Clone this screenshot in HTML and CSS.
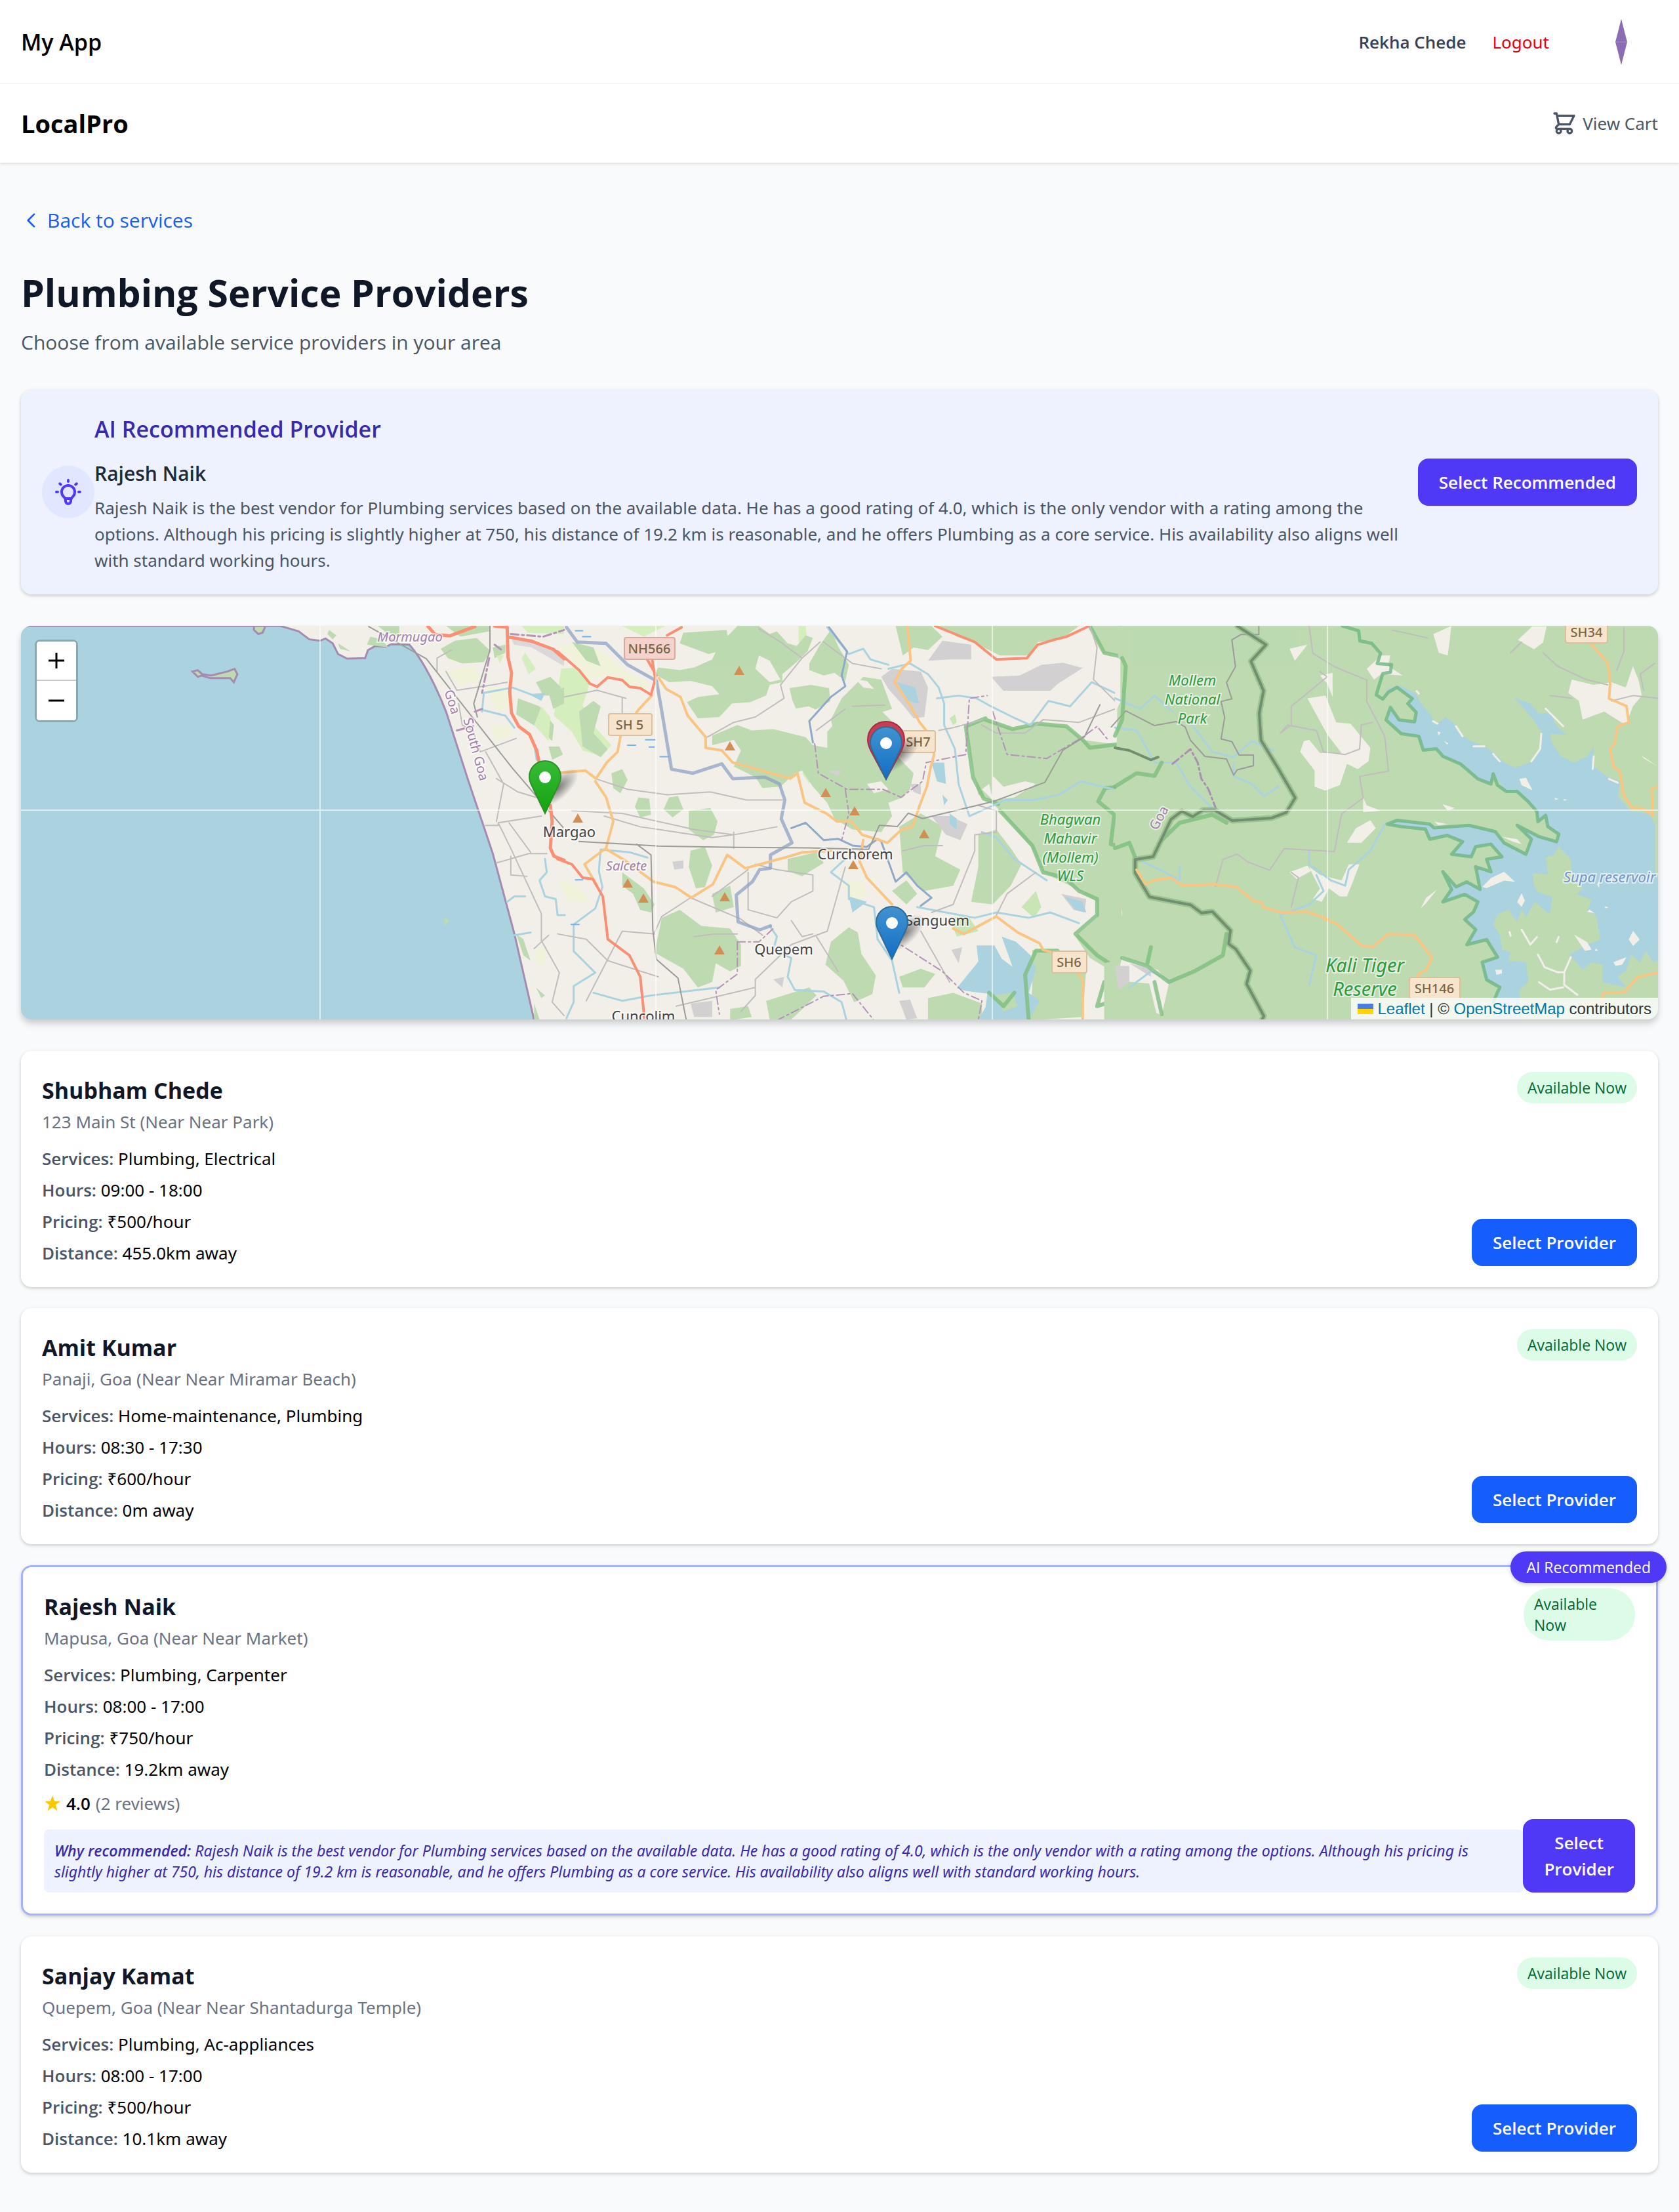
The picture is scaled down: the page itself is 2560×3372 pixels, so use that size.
FILE: index.html
```html
<!DOCTYPE html>
<html lang="en">
<head>
<meta charset="utf-8">
<meta name="viewport" content="width=device-width, initial-scale=1">
<title>LocalPro - Plumbing Service Providers</title>
<link rel="stylesheet" href="styles.css">
</head>
<body>
<nav class="topbar">
  <a class="brand" href="#">My App</a>
  <div class="account">
    <span class="user">Rekha Chede</span>
    <button class="logout" type="button">Logout</button>
    <svg class="avatar" viewBox="0 0 80 80" aria-hidden="true"><path d="M40 5l9 35H31zM40 75l9-35H31z" fill="#8a6db3"/><path d="M31 40h18" stroke="#a58fc6"/></svg>
  </div>
</nav>
<header class="header">
  <a class="logo" href="#">LocalPro</a>
  <a class="cart" href="#">
    <svg class="icon-cart" viewBox="0 0 24 24" aria-hidden="true"><path d="M3 3h2l.4 2M7 13h10l4-8H5.400M7 13L5.400 5M7 13l-2.293 2.293c-.63.63-.184 1.707.707 1.707H17m0 0a2 2 0 100 4 2 2 0 000-4zm-8 2a2 2 0 11-4 0 2 2 0 014 0z"/></svg>
    <span>View Cart</span>
  </a>
</header>
<main class="page">
  <a class="back" href="#">
    <svg class="icon-back" viewBox="0 0 24 24" aria-hidden="true"><path d="M15 19l-7-7 7-7"/></svg>
    <span>Back to services</span>
  </a>
  <h1 class="title">Plumbing Service Providers</h1>
  <p class="subtitle">Choose from available service providers in your area</p>

  <section class="advice">
    <div class="advice-icon">
      <svg class="icon-bulb" viewBox="0 0 24 24" aria-hidden="true"><path d="M9.663 17h4.673M12 3v1m6.364 1.636l-.707.707M21 12h-1M4 12H3m3.343-5.657l-.707-.707m2.828 9.900a5 5 0 117.072 0l-.548.547A3.374 3.374 0 0014 18.469V19a2 2 0 11-4 0v-.531c0-.895-.356-1.754-.988-2.386l-.548-.547z"/></svg>
    </div>
    <div class="advice-body">
      <h2 class="advice-title">AI Recommended Provider</h2>
      <h3 class="advice-name">Rajesh Naik</h3>
      <p class="advice-text">Rajesh Naik is the best vendor for Plumbing services based on the available data. He has a good rating of 4.0, which is the only vendor with a rating among the options. Although his pricing is slightly higher at 750, his distance of 19.2 km is reasonable, and he offers Plumbing as a core service. His availability also aligns well with standard working hours.</p>
    </div>
    <button class="btn btn-indigo advice-btn" type="button">Select Recommended</button>
  </section>

  <section class="map">
    <svg class="map-canvas" viewBox="0 0 2496 600" preserveAspectRatio="xMidYMid slice" role="img" aria-label="Map of providers">
      <defs>
        <linearGradient id="blue" x1="0" y1="0" x2="0" y2="1"><stop offset="0" stop-color="#4292cf"/><stop offset="1" stop-color="#126fc6"/></linearGradient>
        <linearGradient id="green" x1="0" y1="0" x2="0" y2="1"><stop offset="0" stop-color="#38bb38"/><stop offset="1" stop-color="#12a30e"/></linearGradient>
        <radialGradient id="shade"><stop offset="0" stop-color="#000" stop-opacity=".5"/><stop offset="1" stop-color="#000" stop-opacity="0"/></radialGradient>
        <path id="pin" d="M25 1C11.700 1 1 11.700 1 25c0 5 1.600 9.500 4 14L25 81l20-42c2.400-4.500 4-9 4-14C49 11.700 38.300 1 25 1z"/>
        <path id="peak" d="M0-14L8 0H-8z" fill="#d08f55"/>
      </defs>
      <rect width="2496" height="600" fill="#f2efe9"/>

      <!-- central region: coast to the ghats -->
      <g transform="translate(818 -12) scale(.54847 .40816)">
        <g fill="#f0f2da"><path d="M0 110L60 90 130 130 190 200 250 240 255 280 200 250 140 220 90 230 40 160zM790 990l60-10 10 60-40 20zM0 980l60 20 30 60-60 0z"/></g>
        <g fill="#d5eebe"><path d="M180 30h120l-60 40zM10 190l40-5 40 60-20 80 20 60 60 90-30 40-50-20-30-70-50-60zM670 30l20 0 5 60-25 0zM680 580l30-10-10 50z"/></g>
        <g fill="#bddab1">
          <path d="M350 55l120-10 10 70-60 20-80-40zM500 30h60l30 30 20-10 30 45 25 10 25-40 20 10-15 50-30 40-40 45 0 30-35 10-10 40-45 25-50 5-35 50-60 5-30-60 30-20 60-10-20-30-60-20-60 5-40-30 10-25 60 10 40-10 50-30 20-55z"/>
          <path d="M645 262l60-12 50 12 3 50-40 30-20-12-35 8-10-30zM700 170l30-70 30-55 20 60 30 70-10 60-30-30-30 10-40-20zM940 30h100l30 40-40 50-40-10-30 30z"/>
          <path d="M1060 30h390l-50 50-65 10-25 50-80 0-60-40-60-30zM1480 30h88v110l-50-10z"/>
          <path d="M790 300l60-80 50 10 30 110-50 20-30 60-80 20-10-60z"/>
          <path d="M430 440l70-40 40 20 60-5 90 30 20 30 40 10 0-60 40-60 60-30 30-15 60 80 20 60-20 50 50 70-10 60-20 30-40 20 10 50-30 60-80-10-50-40-20-60-40-60-30-60-20 10-40 50-50 5-20-40-60-40 20-60-20-40-60 20z"/>
          <path d="M150 580l30-15 15 40-20 50-20-20zM225 670l30 5 5 60-30 10-15-40zM310 670l25-5 15 50-30 30-25-30zM365 720l60-10 20 50-10 50-30 20-40-40zM370 870l40-15 20 70-20 80-25 5-20-80zM640 900l80-25 20 40-60 50-40-20zM180 950l60 60 30 60-10 30-30-10-20-60-30-30zM430 1030l50-30 10 80-50 20z"/>
          <path d="M290 1120l50-30 60 60 80 10 30 60 0 80-30 20-40-30-10 70-40 20-40-70-80-60zM760 1210l50-55 25 20 10 80 40 80-10 70-50 30-30-80-50-60zM950 1340l60-30 40 20-30 50-60 0zM580 1430l120-50 20 30-70 90-60 0zM480 1460l50-10 10 40-60 13zM1030 1420l70-20 80 40 0 63-150 0z"/>
          <path d="M950 780l60-50 60 50-20 110 70 50-20 60-80 20-60-70zM1170 810l50-20 40 70 30 60-30 80-50 70-60-10 20-130zM930 1020l40-40 30 50-30 40z"/>
          <path d="M1135 405l55-25 75 35 70-20 80 10 45 50 108 20V1310h-38l-50-40-40-80 60-70 0-60-60-50-90-60-30-90-90-140-30-40-30-20-20-130z"/>
          <path d="M40 90l60 20 20 70-40-20zM1320 1240l60 0 90 70-10 180-150 13 10-120zM60 350l40-40 20 20-20 100 40 60-20 30-50-40z"/>
        </g>
        <g fill="#f2efe9"><path d="M560 140l30 20 30 70-30 10-40-50zM1210 590l30 40 60-20 30 10-60 50-60 10zM860 620l40-10 20 30-40 15zM830 230l30 5 20 30-30-5zM1180 640l20-20 10 60z"/></g>
        <g fill="#c8e5b5"><path d="M1090 1120l50-10 30 60-60 20zM1290 1080l40-60 15 60-20 40zM1090 375l15-15 5 30-10 10z"/></g>
        <g fill="#d3d0d1"><path d="M1030 160l40-75 80 15 0 55-60 0zM900 220l30-30 80 10 20 60-10 110-30 5-30-50-40-60zM1205 220l80-5 60-40 60-8 55 20-70 60-20 25-130 0zM750 570l40 0-10 20zM1040 740l50 0 50 30-20 60-40-20zM370 1440l60-10 0 60-50 0zM950 1430l30-5 20 70-30 5zM1095 1240l30-10-10 60zM320 910l30-5 0 30-25 5zM600 1350l30-10-5 40zM1400 1030l70 20-5 50-30-10zM980 620l30 0 0 40-20-10z"/></g>
        <g fill="#aad3df"><path d="M1040 540l35 0 5 80-25-10zM1090 730l20 20 0 40-20-20zM1235 1190l40 20 40 50 15 50-20 90 30 30-30 73-140 0 20-50 5-50-60-10-25-10 60-100-5-60 50 0 20 50 30 30zM1410 1040l50 20 10 40-30-10zM945 240l50 20 10 60-30-10zM810 1040l50 20-40 40zM1070 660l15 20-10 20z"/></g>
        <path d="M1215 1410l50-10 15 50-40 20z" fill="#bddab1"/>
        <g class="ln" stroke="#7fbf7f" stroke-width="6" opacity=".8"><path d="M1480 30l40 100 48 15M1190 380l75 35 70-20 80 10 45 50 20 30 88-15M1190 375l-55 30 20 190 30 80 40 20M1568 630l-45 5-20 50 45 50-10 110 30 10M1230 720l90 130 30 100 60 20 40 50 50 30 0 60-60 70 60 80 68 60M1310 1503l-10-170 30-90 60 0M1200 1400l40 50 30-50M1520 1360l-20 90 68-30"/></g>
        <g class="ln" stroke="#aad3df" stroke-width="3"><path d="M750 35l60 100 40-20 20 40 50 20M920 190l60-20 50 40 30 50 15 60 0 80 30 90 10 130 30 120 100-60 80 0 70-20 60-50 90 30M1055 300l60-10 50 10 40 30 60 40 50 30 50-90 60 20 60-90 80 50M120 865l-5 80 10 60-20 80-60 60 0 100 60 80-60 50 0 60-20 60M100 1400l80 30 80-20 190-30M590 1150l20 40-10 50 50 30-10 70 20 50 80 5 50 40 20 100M800 900l-40 50 50 50 0 50 70 30 10 120 40 80 20 120M1000 1080l80 20 80 20 60-20 90 20 60-20 80 40M1180 800l40 20 50 80 90 80M120 865l80 10 50 20"/></g>
        <g class="ln" stroke="#c0bdbd" stroke-width="2"><path d="M560 40l60 50 60 60 50-60 0 0M680 150l-60 100 10 50-80 70-60 20-80 60M740 90l80 80 80 20M0 300l110-30 80 30M180 300l0 80M105 600l90 40 110 20 120-10 100 30 100 0M40 720l140 10 200 60 110 20 120-30M490 800l0 60M130 740l100 40 200 40 60-10M530 950l0 140 80 30 40-60 60-40 0-60-100-20-60-20M380 1190l60-10 60 0M800 930l-50 240-100 50-100 130 0 60-40 60M370 1045l-80 70-20 60M370 1045l140 80 60 60M270 1180l-90-10-100 260M330 1450l220-70M430 1040l100-100M1060 420l40-10 80-30M1180 400l40 30 80 0 50-50 100 10 100-50 18-20M1480 30l20 80-10 120 60 80M1170 700l50 20 0 80-60 10 0 60-60 200-60 30M1330 950l-80 80-30 80M820 330l90-5M800 340l-80 80M0 1180l80 20 60 80 140 60M720 1190l60 130M960 870l60-20 50 0M1010 1170l80 190M650 1130l30 60 30-10"/></g>
        <g class="ln" stroke="#8fa3c4" stroke-width="5" opacity=".75"><path d="M25 35l30 55 80 5 60 80 80 60 12 90 30 240 60 15 80-35 30 55 90-5 40 25 15 60-10 70 30 90-60 45 0 50-30 5-20 45-45 50 5 100 60 30 30-15"/></g>
        <g class="ln" stroke="#8fa9c9" stroke-width="3"><path d="M650 785l40-20 50 65 40-5 40 25 40 5 30-30 10 10 40 150 30-35 30 50 40 45-30 30"/><path d="M755 35l50 90-15 90 10 40-40 40-60 90 10 80"/></g>
        <g class="ln dash" stroke="#b592b7" stroke-width="2"><path d="M715 470l10 110 80 60 100 0 50 30 60-60 10-70 110-30 10-210 50-10M800 640l10 90-20 100M1210 350l40 160 110 15 100-80 40-40 30 50M500 1210l60 0 40-50M500 1210l0 120-60 60 10 90M610 1503l130-90 80-10 60 100M930 1200l140 120 60 80 50 30-10 70"/></g>
        <g class="ln" stroke="#f8c583" stroke-width="4"><path d="M282 225l20 40 40 30 20 70 50 80 0 40 45 10 30 45 80 30 80 30 20-20 20 110 60 40 30 30 40 0 30 50 50 20 20 10 40-50 30-10 20-80 20-70 10-70 10-50-10-70-30-50-30-70-40-80 20-50 25-30-10-140M262 290l-35 50-50 90-10 70-30 40-30 60-30-30-77 8M105 610l30 60 20 90-20 100-60 60 35 80M137 865l50 40 80 80 60 20 45 40 60-50 40-110 50 50 110-40 50-20 80-5M850 830l-10 80 20 60 70 100M1100 1160l30 20 90-65 60 60 60 40 10 25 60 20 50 90 0 150"/></g>
        <g class="ln" stroke="#f98f74" stroke-width="4"><path d="M0 125l60 70 30 50 20 12 30-35 40 10 20 25 30 5 30 25 12-60-10-80M275 215l-30-70M0 900l40 20 30 50 28 5 28 65 14 160 60 60 30 80 12 160M345 35l-40 30M1050 30l110 60 60 65 85-5 30-50 50-20 30-10 60-38"/></g>
        <g class="ln" stroke="#9c9c99" stroke-width="2"><path d="M60 835l160 12 60 5 220 5 200 2 165 5 30-90 50 5 30-50 40 20 140-45 60-20 80-40 60-30 50-120 60-50 43-120M220 845l40 40 5 280 10 110 60 70 25 170"/></g>
        <path d="M50 48h20M70 70h22M195 475h22M245 455h26M285 518h24M50 978h20M38 1145h22M255 482h14" class="ln" stroke="#6fb0f0" stroke-width="2"/>
      </g>

      <!-- western region: sea, islands and coastline -->
      <g transform="translate(-32 -12) scale(.54847 .40816)">
        <path d="M0 30h780l50 20 30 30 30 5 15-8 20 18 15 40 25 17 50-2 8-30 20-15 30 3 15-10 50 2Q1190 180 1240 350L1300 600 1370 880 1430 1180 1485 1503H0z" fill="#aad3df" stroke="#a48bb0" stroke-width="3" vector-effect="non-scaling-stroke"/>
        <g fill="#bddab1" stroke="#a48bb0"><path d="M706 30h32l-8 25-12 5-12-15zM535 200l15-5 12 15 25 5 45-15 20-10 8 20-10 30-10-15-55 0-25-10-10 5z" stroke-width="3" vector-effect="non-scaling-stroke"/></g>
        <g fill="#bddab1"><path d="M915 45l20 20-10 15-15-20zM940 95l35 30-30-10zM1030 70l30 10 20 30-60-10zM1050 30l60 0 0 40-40-20zM1225 115l40-30 60-10 40 50-20 40-60 5-40-20zM1240 30h120l0 20-80 20zM1370 110l35-10 0 30-30 20zM1440 300l60 30 40 70-5 60-40-50-60-50zM1490 240l40-20 30 40-20 30-30 0zM1525 280l43-20v60l-30 20zM1525 480l30 0 10 30-30 20zM1235 1120l15 10-15 20zM1435 1180l20 20 20 80-20-20zM1490 1380l25 30-10 10zM1485 1440l15 60-15 0z"/></g>
        <g fill="#d5eebe"><path d="M1450 30h118v30l-100-5zM1460 130l30 60-20 20-20-60zM1380 140l20 0-10 30zM1505 330l25 40-5 90-40-60z"/></g>
        <g fill="#f0f2da"><path d="M1230 200l90-20 20 50-60 20zM1350 260l60 0 10 70-40 20zM1360 400l60 0 0 40-40 20zM1490 1240l30-10-5 70-25-10z"/></g>
        <g fill="#dbd8da"><path d="M1420 70l60 10 60 40 28 30v30l-90-70-50-10z"/></g>
        <g class="ln" stroke="#c0bdbd" stroke-width="2"><path d="M1215 200l0-50 40-30M1240 200l30 70 100-20 40-10M1275 320l10 80 30 20 20 80 100-50M1350 500l50 120-20 140M1380 600l60 50 50 20M1350 775l35 0 0-10 120-25M1385 765l40 110 80 230 0 100 50 120-20 110 33 50M1380 915l90-35 50 0M1415 765l60 110M1485 1235l40-50M1420 890l0 70 45 5"/></g>
        <g class="ln" stroke="#9c9c99" stroke-width="2"><path d="M1025 32l160 120 240 410 140 220M1362 30l0 90-45 200 10 50"/></g>
        <g class="ln" stroke="#aad3df" stroke-width="3"><path d="M1340 350l5-70 80-20 60 30M1345 345l60 20 25 45M1410 1060l20-20 30 0M1430 1185l45-10M1515 900l5 50-20 30 15 60 30 10 5 60 20 0M1487 490l5 40"/></g>
        <path d="M1470 285l45-5-10 30z" fill="#aad3df"/>
        <g class="ln" stroke="#f98f74" stroke-width="5"><path d="M1190 32l20 30 40 5 70-35M1375 30l35 5 2 110 10 60-5 70 5 80 20 50 30 30 20 60 20 130M1418 72l60 15 60 30 30 35M1530 700l5 60-5 100 10 30 28 15"/></g>
        <g class="ln dash" stroke="#b592b7" stroke-width="3"><path d="M1420 60l90 10 58-25M1375 100l20 20M1360 150l-20 130M1270 420l30-10M1320 350l20-10M1305 375l10 0 0 30"/></g>
      </g>

      <!-- eastern region: reserves -->
      <g transform="translate(1668 -12) scale(.54847 .40816)">
        <path d="M10 30H1568V1503H-30V1290L0 1280 20 1100 0 900z" fill="#bddab1"/>
        <g fill="#f2efe9">
          <path d="M0 145l15 10 0 160-15 40zM485 115l50-15-35 60zM570 215l35-10 0 90-15-50zM535 300l50-10 30 100 40 5 55 90-5 50-30 30-30-20-20 80-40 20-30-15 0-60-40-70 10-40 15-5 30 50 60 0-40-70zM885 60l50-30-5 60-5 50-25-10zM1160 32l40 0-10 60-25 25-45-35zM740 140l25 0-5 40 40 35-60-5-20 20-20-40zM1270 230l60 20 50-10 40 20 20-80 15 50 10 60-25 40-20 70-60-50-60 30-10-70-30-30zM1465 515l45 40-40-30zM645 840l25-55 40-30 15 30-40 55zM485 950l50-25 10 20-40 30zM540 930l30 30 60 20 20-60 30 0-20 70-15 50-20 0-30-30-20 50-25-10 20-40-20-50zM690 670l10 30 40 20-50 5zM910 695l35 15-20 10zM850 1085l15-40 30-30-30 50zM20 1265l100 50 30 50-20 120-15-10-20-110-90-10z"/>
        </g>
        <path d="M0 1300l40 0 0 60-30 30zM40 1290l60 20 0 30z" fill="#d3d0d1"/>
        <g class="ln" stroke="#aad3df" stroke-width="3"><path d="M0 300l70 40 40-50 50 60M0 410l60 10 50 120 60 0 40 90 60 80 50 40M210 390l60 110 60 20 50-60 60 35M330 540l0 50 50 30 35 45 40-35M60 900l80 50 40 30 0-50M750 770l-40 100-60 70-10 60-40-20-60-60 0-50M560 960l20 60-40 50-80 40 20 60 20 60 60 30-20 110M40 1380l60-60 60 40"/></g>
        <g class="ln" stroke="#c0bdbd" stroke-width="2"><path d="M540 32l10 100 60 50 90 50 0 80 50 130 10 130-80 20 10 80-60 60-20 140-140-10-40 80-60-30-30-30-40 20-20 100M570 200l20 20-100 110 0 70-30 30 20-30 80 20 20 80 60 10 40-20 5-90 30-10M1100 130l30-40M1190 130l40 50 80 50 60 20M1415 35l0 90-20 70M1500 170l-40 40 10 60M1380 310l60-20 70 10M490 950l20 20-20 110M1210 290l60 10M770 45l100 30"/></g>
        <g class="ln" stroke="#9c9c99" stroke-width="2"><path d="M400 32l0 30-50 0-25 20 10 100-25 60 15 60-30 10 10 60-10 80 30 10 20 50 40 0 0 40-45 15-10 20-20-60-60-10-40-60-15-50-25-20-60 15-80-55-40 60"/></g>
        <g class="ln dash" stroke="#ab8fb0" stroke-width="3"><path d="M160 545l50-55 20 50 10 60 20 40 20 70"/></g>
        <g class="ln" stroke="#7fbf7f" stroke-width="6" opacity=".8"><path d="M0 630l60-50 50 10 20-50M0 860l40-20 15 50M130 830l50-65 90-30 40 30M20 1270l70 30 60 60 70-40 80-60 10-80M130 1480l-20-120M20 150l10 30-10 200-20 60M100 1230l-10 60"/></g>
        <g class="ln" stroke="#8fbb87" stroke-width="9" opacity=".7"><path d="M340 30l80 70-42 62 35 110-12 85 5 100 50 110 45 105-25 55-40 20-110 10-50-40-30 0-30 25-30-20-30 30-50 140-50 10 0 50 40 90 115 30 30 30 30-5 50 70-5 50 20 20 40 80-10 50 48 120-15 40"/></g>
        <g class="ln" stroke="#728e6f" stroke-width="4"><path d="M340 30l80 70-42 62 35 110-12 85 5 100 50 110 45 105-25 55-40 20-110 10-50-40-30 0-30 25-30-20-30 30-50 140-50 10 0 50 40 90 115 30 30 30 30-5 50 70-5 50 20 20 40 80-10 50 48 120-15 40M0 485l40 10 60 35 20-10"/></g>
      </g>

      <!-- Supa reservoir -->
      <g transform="translate(1988 0) scale(.33333 .38265)">
        <path fill="#aad3df" d="M235 275L265 292 290 250 340 238 415 270 440 310 480 350 510 390 555 365 600 395 620 430 670 460 720 475 780 510 820 545 870 565 950 540 985 490 990 420 950 370 865 285 940 310 980 350 1030 345 1060 400 1110 435 1030 430 1040 470 1080 520 1140 545 1200 520 1230 480 1230 560 1290 600 1350 620 1340 680 1400 740 1480 745 1510 790 1510 980 1530 1000V1330L1500 1340 1470 1295 1440 1340 1400 1310 1380 1370 1340 1400 1380 1440 1270 1420 1270 1350 1220 1340 1180 1370 1120 1310 1200 1270 1260 1250 1240 1150 1200 1140 1220 1090 1150 1070 1180 1050 1130 990 1125 930 1070 880 1045 915 1010 920 1020 990 950 985 955 1030 970 1060 1040 1080 1030 1150 960 1100 920 1160 900 1130 880 1180 840 1130 790 1150 770 1190 800 1230 810 1290 850 1300 840 1335 920 1340 930 1420 890 1450 900 1568H770L800 1440 740 1410 720 1340 790 1320 740 1250 650 1270 690 1210 640 1170 680 1140 700 1100 640 1070 540 1100 580 1050 540 980 600 1040 650 1020 710 1050 690 960 760 980 740 930 810 920 760 870 690 880 670 920 580 910 630 860 560 835 480 850 460 810 350 800 285 790 330 775 480 790 500 805 660 795 780 820 820 865 920 910 945 850 880 795 980 840 1060 860 1070 830 1020 800 1010 755 975 780 970 740 930 700 880 660 830 660 770 590 760 630 700 610 620 550 540 520 510 490 450 495 430 440 350 430 290 375 300 325 340 375 410 382 418 345 380 310 400 290 330 245 290 265 265 292z"/>
        <g class="ln" stroke="#6fb684"><path stroke-width="5" opacity=".8" d="M80 0L155 20 160 60 215 70 255 110 240 150 305 155 300 185 265 190 235 275 265 292 290 265 330 245 400 290 380 310 418 345 410 382 340 375 300 325 280 375 350 430 430 440 450 495 510 490 540 520 620 550 700 610 760 630 770 590 790 635 830 660 880 660 930 700 970 740 975 780 1010 755 1020 800 1070 830 1060 860 980 840 880 795 945 850 920 910 820 865 780 820 660 795 500 805 480 790 330 775 285 790 350 800 460 810 480 850 560 835 630 860 580 910 670 920 690 880 760 870 810 920 740 930 760 980 690 960 710 1050 650 1020 600 1040 540 980 580 1050 540 1100 640 1070 700 1100 680 1140 640 1170 690 1210 650 1270 740 1250 790 1320 720 1340 740 1410 800 1440 770 1500"/></g>
        <path fill="#f2efe9" d="M890 610l30-5 30 50-50-20zM720 1040l40-35 60-25 50 40-50-5-80 30zM880 1100l20-35 15 30-15 25zM780 1370l30 0 0 15-25 5zM1390 1250l20-35 30 35-30 25zM515 420l15 5-10 12zM545 460l20 8-5 5zM1050 685l20 5-15 3zM1090 690l20 3-15 4zM1320 1340l60-20-20 30-30 5zM1200 1140l35 5-25-15zM1245 1030l10-15 0 30zM1280 1118l18 3-15 5zM1140 1230l60 30 20 30-30 5zM500 780l60 10-40 5zM810 840l70 10 20 20-40-10zM1240 1285l10 10-15 0z"/>
        <g class="ln" stroke="#f2efe9" stroke-width="3"><path d="M900 1210l40 60 30-30M975 1310l30 50 60 20 30 0 30-60M1095 1380l0 50 60 40M980 1420l50 30 60-10M1060 1260l10-20M845 1220l5 15M430 270l-10-10M495 380l20 10M600 400l30 40M680 480l50 0M770 510l30 30M990 430l-5 60-40 50M1010 330l80 70M1230 520l-5 50M1300 610l40 15"/></g>
        <g class="ln" stroke="#f8c583" stroke-width="4"><path d="M1215 70L1295 150 1305 230 1300 290 1380 320 1390 385 1340 400 1325 470 1305 490 1320 560 1350 580 1365 670 1405 725 1460 730 1500 755 1495 650 1530 640M1530 1380L1430 1400 1370 1460 1275 1460 1265 1500 1180 1510M0 1170L50 1185 170 1275 220 1278 290 1228 410 1232 490 1320 465 1370 430 1385 425 1400"/></g>
      </g>
      <path class="ln" stroke="#f8c583" stroke-width="4" d="M1701 372l14 22 12-6 27-4 16 12 50-2 33 4 27 22 11 1 3 8 27 8 40-1 32 11"/>

      <g fill="none" stroke="#fff" stroke-opacity=".6" stroke-width="2"><path d="M456 0v600M968 0v600M1481 0v600M1992 0v600M0 281h2496"/></g>

      <g>
        <use href="#peak" x="1095" y="75"/><use href="#peak" x="1081" y="190"/><use href="#peak" x="1227" y="261"/><use href="#peak" x="1271" y="289"/><use href="#peak" x="1377" y="324"/><use href="#peak" x="1269" y="371"/><use href="#peak" x="849" y="300"/><use href="#peak" x="925" y="399"/><use href="#peak" x="949" y="422"/><use href="#peak" x="1073" y="420"/><use href="#peak" x="1065" y="501"/>
      </g>

      <g stroke-width="2">
        <g fill="#f3d3cb" stroke="#dba99c"><rect x="920" y="18" width="77" height="33" rx="3"/></g>
        <g fill="#f7e4cd" stroke="#dcbf9c"><rect x="896" y="134" width="66" height="33" rx="3"/><rect x="1342" y="160" width="52" height="33" rx="3"/><rect x="1572" y="496" width="53" height="33" rx="3"/><rect x="2355" y="-6" width="64" height="32" rx="3"/><rect x="2117" y="536" width="77" height="33" rx="3"/></g>
      </g>
      <g class="shield" text-anchor="middle">
        <text x="958" y="42">NH566</text><text x="928" y="158">SH 5</text><text x="1368" y="184">SH7</text><text x="1598" y="520">SH6</text><text x="2387" y="17">SH34</text><text x="2155" y="560">SH146</text>
      </g>
      <g class="town" text-anchor="middle">
        <text x="836" y="322">Margao</text><text x="1272" y="356">Curchorem</text><text x="1397" y="457">Sanguem</text><text x="1163" y="501">Quepem</text><text x="949" y="603">Cuncolim</text>
      </g>
      <g class="area" text-anchor="middle">
        <text x="593" y="24">Mormugao</text><text x="923" y="373">Salcete</text>
        <text transform="translate(651 118) rotate(72)" class="area-up">Goa</text>
        <text transform="translate(687 190) rotate(75)" class="area-up">South Goa</text>
        <text transform="translate(1741 296) rotate(-62)" class="area-up">Goa</text>
      </g>
      <g class="park" text-anchor="middle">
        <text x="1786" y="91">Mollem</text><text x="1786" y="120">National</text><text x="1786" y="149">Park</text>
        <text x="1600" y="303">Bhagwan</text><text x="1600" y="332">Mahavir</text><text x="1600" y="361">(Mollem)</text><text x="1600" y="389">WLS</text>
        <g class="park-big"><text x="2049" y="528">Kali Tiger</text><text x="2049" y="564">Reserve</text></g>
      </g>
      <text class="lake" x="2352" y="391">Supa reservoir</text>

      <g>
        <ellipse cx="22" cy="0" rx="40" ry="17" fill="url(#shade)" transform="translate(802 262) rotate(-42)"/>
        <ellipse cx="22" cy="0" rx="40" ry="17" fill="url(#shade)" transform="translate(1322 211) rotate(-42)"/>
        <ellipse cx="22" cy="0" rx="40" ry="17" fill="url(#shade)" transform="translate(1330 484) rotate(-42)"/>
        <use href="#pin" x="774" y="205" fill="url(#green)" stroke="#2c9129" stroke-width="2"/><circle cx="799" cy="231" r="9" fill="#fff"/>
        <path d="M1319 146c-16 0-28 12-28 28 0 6 2 11 5 17l23 43 23-43c3-6 5-11 5-17 0-16-12-28-28-28z" fill="#cb3d57" stroke="#a92c45" stroke-width="2"/>
        <use href="#pin" x="1294" y="153" fill="url(#blue)" stroke="#2e6c97" stroke-width="2"/><circle cx="1319" cy="179" r="9" fill="#fff"/>
        <use href="#pin" x="1303" y="427" fill="url(#blue)" stroke="#2e6c97" stroke-width="2"/><circle cx="1328" cy="453" r="9" fill="#fff"/>
      </g>
    </svg>
    <div class="zoom">
      <button class="zoom-btn" type="button" aria-label="Zoom in"><svg class="icon-zoom" viewBox="0 0 24 24" aria-hidden="true"><path d="M0 12h24M12 0v24"/></svg></button>
      <button class="zoom-btn" type="button" aria-label="Zoom out"><svg class="icon-zoom" viewBox="0 0 24 24" aria-hidden="true"><path d="M0 12h24"/></svg></button>
    </div>
    <div class="credit">
      <svg class="flag" viewBox="0 0 12 8" aria-hidden="true"><path fill="#4c7be1" d="M0 0h12v4H0z"/><path fill="#ffd500" d="M0 4h12v4H0z"/></svg>
      <a href="#">Leaflet</a> | © <a href="#">OpenStreetMap</a> contributors
    </div>
  </section>

  <ul class="providers">
    <li class="card">
      <div class="info">
        <h2 class="name">Shubham Chede</h2>
        <p class="address">123 Main St (Near Near Park)</p>
        <div class="facts">
          <p><span class="label">Services:</span> Plumbing, Electrical</p>
          <p><span class="label">Hours:</span> 09:00 - 18:00</p>
          <p><span class="label">Pricing:</span> ₹500/hour</p>
          <p><span class="label">Distance:</span> 455.0km away</p>
        </div>
      </div>
      <div class="side">
        <span class="status">Available Now</span>
        <button class="btn btn-blue" type="button">Select Provider</button>
      </div>
    </li>
    <li class="card">
      <div class="info">
        <h2 class="name">Amit Kumar</h2>
        <p class="address">Panaji, Goa (Near Near Miramar Beach)</p>
        <div class="facts">
          <p><span class="label">Services:</span> Home-maintenance, Plumbing</p>
          <p><span class="label">Hours:</span> 08:30 - 17:30</p>
          <p><span class="label">Pricing:</span> ₹600/hour</p>
          <p><span class="label">Distance:</span> 0m away</p>
        </div>
      </div>
      <div class="side">
        <span class="status">Available Now</span>
        <button class="btn btn-blue" type="button">Select Provider</button>
      </div>
    </li>
    <li class="card card-pick">
      <span class="ribbon">AI Recommended</span>
      <div class="info">
        <h2 class="name">Rajesh Naik</h2>
        <p class="address">Mapusa, Goa (Near Near Market)</p>
        <div class="facts">
          <p><span class="label">Services:</span> Plumbing, Carpenter</p>
          <p><span class="label">Hours:</span> 08:00 - 17:00</p>
          <p><span class="label">Pricing:</span> ₹750/hour</p>
          <p><span class="label">Distance:</span> 19.2km away</p>
        </div>
        <p class="rating">
          <svg class="icon-star" viewBox="0 0 24 24" aria-hidden="true"><path d="M12 1l2.800 8H23l-6.600 5.200 2.400 8.300L12 17.600l-6.800 4.900 2.400-8.300L1 9h8.200z"/></svg>
          <span class="score">4.0</span>
          <span class="reviews">(2 reviews)</span>
        </p>
        <p class="why"><strong>Why recommended:</strong> Rajesh Naik is the best vendor for Plumbing services based on the available data. He has a good rating of 4.0, which is the only vendor with a rating among the options. Although his pricing is slightly higher at 750, his distance of 19.2 km is reasonable, and he offers Plumbing as a core service. His availability also aligns well with standard working hours.</p>
      </div>
      <div class="side side-narrow">
        <span class="status">Available Now</span>
        <button class="btn btn-indigo" type="button">Select Provider</button>
      </div>
    </li>
    <li class="card">
      <div class="info">
        <h2 class="name">Sanjay Kamat</h2>
        <p class="address">Quepem, Goa (Near Near Shantadurga Temple)</p>
        <div class="facts">
          <p><span class="label">Services:</span> Plumbing, Ac-appliances</p>
          <p><span class="label">Hours:</span> 08:00 - 17:00</p>
          <p><span class="label">Pricing:</span> ₹500/hour</p>
          <p><span class="label">Distance:</span> 10.1km away</p>
        </div>
      </div>
      <div class="side">
        <span class="status">Available Now</span>
        <button class="btn btn-blue" type="button">Select Provider</button>
      </div>
    </li>
  </ul>
</main>
</body>
</html>
```
FILE: styles.css
```css
* { box-sizing: border-box; margin: 0; padding: 0; }

:root {
  --display: "Open Sans", "Noto Sans", sans-serif;
  --text: "Noto Sans", "Open Sans", sans-serif;
}

body {
  background: #f9fafb;
  color: #000;
  font-family: var(--text);
  font-size: 26px;
  line-height: 40px;
}

a { color: inherit; text-decoration: none; }
button { font: inherit; border: 0; cursor: pointer; }
ul { list-style: none; }

/* Bars */
.topbar, .header {
  display: flex;
  align-items: center;
  justify-content: space-between;
  padding: 0 32px;
  background: #fff;
}
.topbar { height: 128px; }
.header {
  position: relative;
  height: 120px;
  box-shadow: 0 0 3px rgba(0, 0, 0, .08), 0 2px 4px rgba(0, 0, 0, .1);
}
.brand { font-family: var(--display); font-size: 34px; font-weight: 600; }
.logo { font-family: var(--display); font-size: 38px; font-weight: 700; }
.account { display: flex; align-items: center; gap: 40px; }
.user { color: #364153; font-family: var(--display); font-weight: 600; }
.logout { background: none; color: #e7000b; }
.avatar { width: 80px; height: 80px; margin: 0 16px 0 30px; }
.cart { display: flex; align-items: center; gap: 8px; color: #4a5565; }
.icon-cart, .icon-back, .icon-bulb {
  fill: none;
  stroke: currentColor;
  stroke-width: 2;
  stroke-linecap: round;
  stroke-linejoin: round;
}
.icon-cart { width: 40px; height: 40px; }

/* Page head */
.page { padding: 64px 32px 60px; }
.back {
  display: inline-flex;
  align-items: center;
  gap: 8px;
  color: #155dfc;
  font-family: var(--display);
  font-size: 30px;
  line-height: 48px;
}
.icon-back { width: 32px; height: 32px; }
.title {
  margin-top: 48px;
  color: #101828;
  font-family: var(--display);
  font-size: 57px;
  font-weight: 700;
  line-height: 72px;
}
.subtitle {
  margin-top: 16px;
  color: #4a5565;
  font-family: var(--display);
  font-size: 30px;
  line-height: 48px;
}

/* Recommendation banner */
.advice {
  display: flex;
  align-items: center;
  margin-top: 48px;
  padding: 32px;
  border-radius: 16px;
  background: #eef2ff;
  box-shadow: 0 2px 6px rgba(0, 0, 0, .1), 0 2px 4px rgba(0, 0, 0, .1);
}
.advice-icon {
  flex: none;
  padding: 16px;
  border-radius: 50%;
  background: #e0e7ff;
  color: #4f39f6;
  line-height: 0;
}
.icon-bulb { width: 48px; height: 48px; }
.advice-body { flex: 1; }
.advice-title { color: #372aac; font-family: var(--display); font-size: 34px; font-weight: 600; line-height: 56px; }
.advice-name { margin-top: 16px; color: #1e2939; font-family: var(--display); font-size: 30px; font-weight: 600; line-height: 48px; }
.advice-text { margin-top: 8px; color: #4a5565; }
.advice-btn { flex: none; margin-bottom: 30px; }

.btn {
  padding: 16px 32px;
  border-radius: 16px;
  color: #fff;
  font-family: var(--display);
  font-weight: 600;
  text-align: center;
}
.btn-indigo { background: #4f39f6; }
.btn-blue { background: #155dfc; }

/* Map */
.map {
  position: relative;
  height: 600px;
  margin-top: 48px;
  overflow: hidden;
  border-radius: 16px;
  background: #aad3df;
  box-shadow: 0 8px 12px rgba(0, 0, 0, .1), 0 4px 8px rgba(0, 0, 0, .1);
}
.map-canvas { display: block; width: 100%; height: 100%; font-family: var(--text); font-size: 22px; }
.ln { fill: none; stroke-linejoin: round; stroke-linecap: round; }
.ln path, path.ln { vector-effect: non-scaling-stroke; }
.dash { stroke-dasharray: 12 5 3 5; }
.shield { fill: #7b6545; font-size: 20px; font-weight: 500; }
.town, .area, .park, .lake { paint-order: stroke; stroke: rgba(255, 255, 255, .6); stroke-width: 4px; }
.town { fill: #444; }
.area { fill: #a37fa8; font-size: 20px; font-style: italic; }
.area-up { font-style: normal; }
.park { fill: #2f9a3b; font-style: italic; }
.park-big { font-size: 29px; }
.lake { fill: #7396c9; font-size: 22px; font-style: italic; }
.zoom {
  position: absolute;
  top: 21px;
  left: 21px;
  border: 3px solid rgba(0, 0, 0, .2);
  border-radius: 8px;
  background-clip: padding-box;
}
.zoom-btn {
  display: grid;
  place-items: center;
  width: 60px;
  height: 60px;
  border-radius: 0 0 4px 4px;
  background: #fff;
}
.zoom-btn:first-child { border-bottom: 2px solid #ccc; border-radius: 4px 4px 0 0; }
.icon-zoom { width: 24px; height: 24px; stroke: #000; stroke-width: 3; }
.credit {
  position: absolute;
  right: 0;
  bottom: 0;
  padding: 0 10px;
  background: rgba(255, 255, 255, .8);
  color: #333;
  font-family: "Liberation Sans", sans-serif;
  font-size: 24px;
  line-height: 33px;
}
.credit a { color: #0078a8; }
.flag { width: 24px; height: 16px; }

/* Provider cards */
.providers { display: grid; gap: 32px; margin-top: 48px; }
.card {
  position: relative;
  display: flex;
  justify-content: space-between;
  padding: 32px;
  border-radius: 16px;
  background: #fff;
  box-shadow: 0 2px 6px rgba(0, 0, 0, .1), 0 2px 4px rgba(0, 0, 0, .1);
}
.card-pick { border: 3px solid #a3b3ff; }
.info { flex: 1; }
.name { color: #101828; font-family: var(--display); font-size: 34px; font-weight: 700; line-height: 56px; }
.address { color: #6a7282; }
.facts { display: grid; gap: 8px; margin-top: 16px; }
.label { color: #4a5565; font-family: var(--display); font-weight: 600; }
.rating { display: flex; align-items: center; gap: 8px; margin-top: 8px; line-height: 48px; }
.icon-star { width: 26px; height: 26px; fill: #fdc700; }
.score { font-family: var(--display); font-weight: 600; }
.reviews { color: #6a7282; }
.why {
  margin-top: 16px;
  padding: 16px;
  border-radius: 8px;
  background: #eef2ff;
  color: #372aac;
  font-size: 23px;
  font-style: italic;
  line-height: 32px;
}
.why strong { font-family: var(--display); font-weight: 600; }
.side {
  display: flex;
  flex: none;
  flex-direction: column;
  align-items: flex-end;
  justify-content: space-between;
}
.side-narrow { width: 170px; }
.status {
  padding: 8px 16px;
  border-radius: 40px;
  background: #dcfce7;
  color: #016630;
  font-family: var(--display);
  font-size: 23px;
  line-height: 32px;
}
.ribbon {
  position: absolute;
  top: -24px;
  right: -16px;
  padding: 8px 24px;
  border-radius: 24px;
  background: #4f39f6;
  box-shadow: 0 2px 6px rgba(0, 0, 0, .2);
  color: #fff;
  font-family: var(--display);
  font-size: 23px;
  line-height: 32px;
}
```
